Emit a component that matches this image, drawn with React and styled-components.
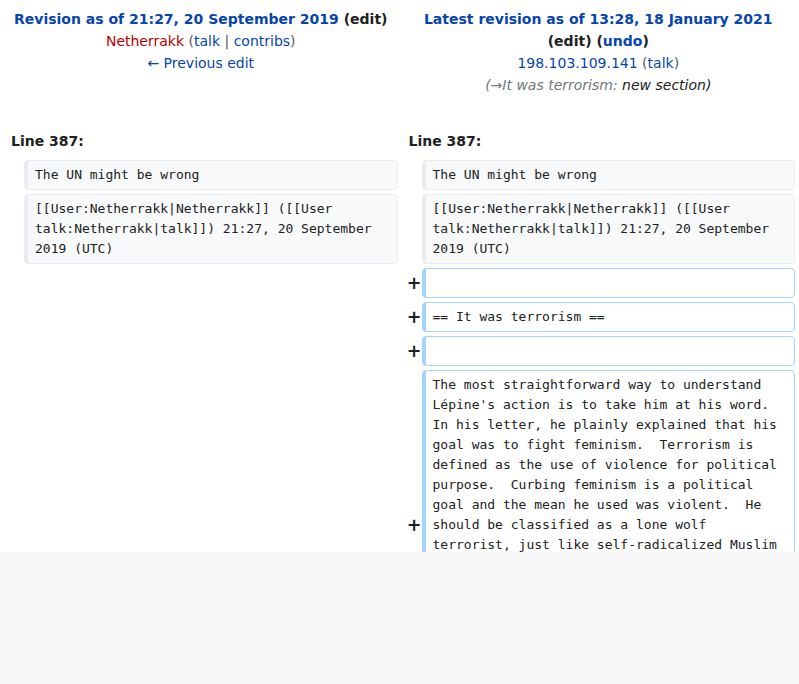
import styled, { createGlobalStyle } from "styled-components";

const GlobalStyle = createGlobalStyle`
  html, body {
    margin: 0;
    padding: 0;
    background: #f6f6f6;
  }
  body {
    font-family: "DejaVu Sans", sans-serif;
    color: #202122;
  }
`;

const Page = styled.div`
  width: 799px;
  height: 552px;
  overflow: hidden;
  background: #ffffff;
`;

const DiffGrid = styled.div`
  display: grid;
  grid-template-columns: 16px 1fr 16px 1fr;
  gap: 4px;
  padding: 4px;
  font-size: 14px;
`;

const Title = styled.div`
  grid-column: span 2;
  padding: 4px 7px;
  text-align: center;
  line-height: 22px;
`;

const TitleLine = styled.div`
  min-height: 22px;
`;

const Link = styled.a`
  color: ${(p) => (p.$red ? "#ba0000" : "#0645ad")};
  text-decoration: none;
  cursor: pointer;
`;

const Strong = styled.strong`
  font-weight: 700;
`;

const Muted = styled.span`
  color: #54595d;
`;

const Comment = styled.span`
  font-style: italic;
`;

const AutoComment = styled.span`
  color: #72777d;
`;

const LineNo = styled.div`
  grid-column: span 2;
  padding: 4px 7px;
  font-weight: 700;
  line-height: 22px;
`;

const Marker = styled.div`
  display: flex;
  align-items: center;
  justify-content: flex-end;
  margin-right: -4px;
  font-size: 17.5px;
  font-weight: 700;
  color: #202122;
`;

const Cell = styled.div`
  padding: 4px 7px;
  border: 1px solid ${(p) => (p.$added ? "#a3d3ff" : "#eaecf0")};
  border-left-width: 4px;
  border-radius: 4.6px;
  background: ${(p) => (p.$added ? "#ffffff" : "#f8f9fa")};
  font-family: "DejaVu Sans Mono", monospace;
  font-size: 13px;
  line-height: 20px;
  white-space: pre-wrap;
  overflow-wrap: break-word;
  min-height: 20px;
`;

const Blank = styled.div``;

const context = [
  "The UN might be wrong",
  "[[User:Netherrakk|Netherrakk]] ([[User talk:Netherrakk|talk]]) 21:27, 20 September 2019 (UTC)",
];

const added = [
  "",
  "== It was terrorism ==",
  "",
  "The most straightforward way to understand Lépine's action is to take him at his word.  In his letter, he plainly explained that his goal was to fight feminism.  Terrorism is defined as the use of violence for political purpose.  Curbing feminism is a political goal and the mean he used was violent.  He should be classified as a lone wolf terrorist, just like self-radicalized Muslim terrorists who act alone in the name of their cause.  The fact that he targeted women only because they were women does not make it less political, it makes it more so.  Calling it a mass shooting hides the motive he stated himself.",
];

export default function App() {
  return (
    <>
      <GlobalStyle />
      <Page>
        <DiffGrid>
          <Title>
            <TitleLine>
              <Strong>
                <Link>Revision as of 21:27, 20 September 2019</Link> (edit)
              </Strong>
            </TitleLine>
            <TitleLine>
              <Link $red>Netherrakk</Link> <Muted>(</Muted>
              <Link>talk</Link> <Muted>|</Muted> <Link>contribs</Link>
              <Muted>)</Muted>
            </TitleLine>
            <TitleLine>
              <Link>← Previous edit</Link>
            </TitleLine>
          </Title>
          <Title>
            <TitleLine>
              <Strong>
                <Link>Latest revision as of 13:28, 18 January 2021</Link>{" "}
                (edit) (<Link>undo</Link>)
              </Strong>
            </TitleLine>
            <TitleLine>
              <Link>198.103.109.141</Link> <Muted>(</Muted>
              <Link>talk</Link>
              <Muted>)</Muted>
            </TitleLine>
            <TitleLine>
              <Comment>
                <AutoComment>(→It was terrorism:</AutoComment> new section)
              </Comment>
            </TitleLine>
            <TitleLine />
          </Title>

          <LineNo>Line 387:</LineNo>
          <LineNo>Line 387:</LineNo>

          {context.map((text, i) => (
            <>
              <Blank key={`lm${i}`} />
              <Cell key={`l${i}`}>{text}</Cell>
              <Blank key={`rm${i}`} />
              <Cell key={`r${i}`}>{text}</Cell>
            </>
          ))}

          {added.map((text, i) => (
            <>
              <Blank key={`am${i}`} />
              <Blank key={`ab${i}`} />
              <Marker key={`mk${i}`}>+</Marker>
              <Cell key={`ac${i}`} $added>
                {text || <br />}
              </Cell>
            </>
          ))}
        </DiffGrid>
      </Page>
    </>
  );
}
